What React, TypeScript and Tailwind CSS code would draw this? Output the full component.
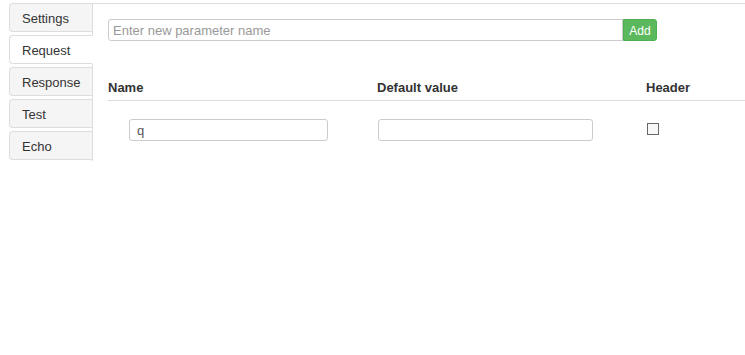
const tabs = ['Settings', 'Request', 'Response', 'Test', 'Echo'];

export default function App() {
  const active = 'Request';

  return (
    <div className="flex pt-[3px] pl-[9px] font-['Liberation_Sans',Arial,sans-serif] text-[13px] text-[#333] bg-white min-h-[355px]">
      {/* Left tabs */}
      <div className="w-[84px] h-[158px] border-r border-[#ddd] flex flex-col gap-[3px]">
        {tabs.map((t) => (
          <div
            key={t}
            className={`h-[29px] flex items-center pl-[12px] pt-[2px] rounded-l-[4px] border ${
              t === active
                ? 'bg-white border-[#ddd] border-r-white -mr-[1px]'
                : 'bg-[#f5f5f5] border-[#ddd] border-r-0'
            }`}
          >
            {t}
          </div>
        ))}
      </div>

      {/* Content */}
      <div className="flex-1 border-t border-[#ddd] pl-[15px]">
        <div className="flex mt-[15px]">
          <input
            className="w-[515px] h-[22px] border border-[#ccc] rounded-l-[3px] px-[4px] pt-[1px] text-[13px] placeholder:text-[#999] outline-none"
            placeholder="Enter new parameter name"
          />
          <button className="w-[34px] h-[22px] bg-[#5cb85c] border border-[#4cae4c] rounded-r-[3px] text-white text-[12px] leading-none pt-[1px]">
            Add
          </button>
        </div>

        {/* Table header */}
        <div className="flex mt-[38px] pb-[3px] border-b border-[#ddd] font-bold leading-[18px]">
          <div className="w-[269px]">Name</div>
          <div className="w-[269px]">Default value</div>
          <div>Header</div>
        </div>

        {/* Row */}
        <div className="flex items-center mt-[18px]">
          <div className="w-[269px] pl-[21px]">
            <input
              className="w-[199px] h-[22px] border border-[#ccc] rounded-[3px] px-[7px] text-[13px] text-[#555] outline-none"
              defaultValue="q"
            />
          </div>
          <div className="w-[269px] pl-[1px]">
            <input className="w-[215px] h-[22px] border border-[#ccc] rounded-[3px] px-[7px] text-[13px] outline-none" />
          </div>
          <div className="pl-[1px] pt-[4px] self-start">
            <span className="block w-[12px] h-[12px] border border-[#666] bg-[#f8f8f8]" />
          </div>
        </div>
      </div>
    </div>
  );
}
